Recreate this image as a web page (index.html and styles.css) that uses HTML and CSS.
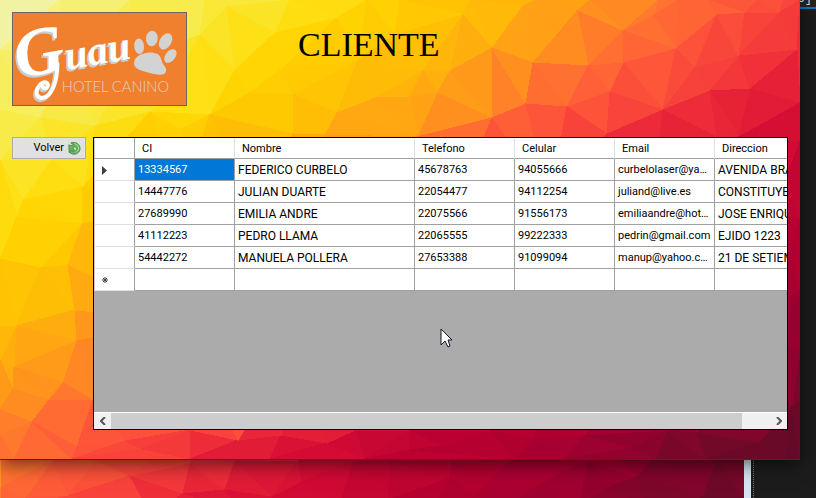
FILE: index.html
```html
<!DOCTYPE html>
<html lang="es">
<head>
<meta charset="utf-8">
<title>Cliente</title>
<link rel="stylesheet" href="styles.css">
</head>
<body>
<div class="desktop">
  <div class="editor" aria-hidden="true"><span class="code">6]</span></div>
  <div class="splitter" aria-hidden="true"></div>
  <div class="back-window" aria-hidden="true"><svg class="facets" id="back-facets"></svg></div>

  <main class="window">
    <svg class="facets" id="front-facets" aria-hidden="true"></svg>

    <header class="top">
      <svg class="logo" viewBox="0 0 175 94" role="img" aria-label="Guau Hotel Canino">
        <g transform="rotate(-10 15 74)">
          <path class="flourish-shade" d="M46 58C43 75 35 92 24 91C14 88 24 73 31 76C36 79 29 85 27 80"/>
          <text class="word shade" x="4" y="67"><tspan class="initial">G</tspan><tspan>uau</tspan></text>
          <path class="flourish" d="M48 57C45 74 37 90 26 89C16 86 26 71 33 74C38 77 31 83 29 78"/>
          <text class="word face" x="6" y="65"><tspan class="initial">G</tspan><tspan>uau</tspan></text>
        </g>
        <g class="paw">
          <ellipse cx="128" cy="34" rx="5" ry="8" transform="rotate(-5 128 34)"/>
          <ellipse cx="141" cy="26" rx="6" ry="8" transform="rotate(5 141 26)"/>
          <ellipse cx="155" cy="29" rx="6" ry="9" transform="rotate(30 155 29)"/>
          <ellipse cx="160" cy="44" rx="5" ry="8" transform="rotate(38 160 44)"/>
          <path d="M123 50C124 43 135 39 144 41C151 42 150 48 153 53C159 60 154 64 148 63C141 62 137 61 131 59C125 57 122 54 123 50Z"/>
        </g>
        <text x="49" y="81" class="logo-sub">HOTEL CANINO</text>
      </svg>
      <h1>CLIENTE</h1>
    </header>

    <div class="content">
      <button type="button" class="back">Volver
        <svg class="back-icon" viewBox="0 0 14 14" aria-hidden="true">
          <path d="M3 1C9 -1 13 3 13 7C13 11 9 14 5 13L1 11L1 10C5 11 8 10 9 8C9 5 7 5 5 6L7 9L1 9L1 3L3 4C5 3 6 3 7 3Z" fill="#6ab85f" stroke="#4a8f4c"/>
          <path d="M7 2C12 3 13 8 9 11" fill="none" stroke="#b4e3a4"/>
        </svg>
      </button>

      <section class="grid" aria-label="Clientes">
        <div class="grid-view">
          <table>
            <colgroup><col class="c-mark"><col><col class="c-name"><col><col><col><col></colgroup>
            <thead>
              <tr><th></th><th>CI</th><th>Nombre</th><th>Telefono</th><th>Celular</th><th>Email</th><th>Direccion</th></tr>
            </thead>
            <tbody>
              <tr><th><svg class="mark" viewBox="0 0 5 9"><path d="M0 0L5 4.500L0 9Z"/></svg></th><td class="selected">13334567</td><td class="caps">FEDERICO CURBELO</td><td>45678763</td><td>94055666</td><td class="email">curbelolaser@yahoo.com</td><td class="caps">AVENIDA BRASIL</td></tr>
              <tr><th></th><td>14447776</td><td class="caps">JULIAN DUARTE</td><td>22054477</td><td>94112254</td><td>juliand@live.es</td><td class="caps">CONSTITUYENTE</td></tr>
              <tr><th></th><td>27689990</td><td class="caps">EMILIA ANDRE</td><td>22075566</td><td>91556173</td><td class="email">emiliaandre@hotmail.com</td><td class="caps">JOSE ENRIQUE</td></tr>
              <tr><th></th><td>41112223</td><td class="caps">PEDRO LLAMA</td><td>22065555</td><td>99222333</td><td class="email">pedrin@gmail.com</td><td class="caps">EJIDO 1223</td></tr>
              <tr><th></th><td>54442272</td><td class="caps">MANUELA POLLERA</td><td>27653388</td><td>91099094</td><td class="email">manup@yahoo.com.uy</td><td class="caps">21 DE SETIEMBRE</td></tr>
              <tr><th><svg class="mark star" viewBox="0 0 6 6"><path d="M3 0V6M0 3H6M1 1L5 5M5 1L1 5"/></svg></th><td></td><td></td><td></td><td></td><td></td><td></td></tr>
            </tbody>
          </table>
        </div>
        <div class="scroll">
          <button type="button" aria-label="Izquierda"><svg viewBox="0 0 6 8"><path d="M5 0L1 4L5 8"/></svg></button>
          <div class="track"><div class="thumb"></div></div>
          <button type="button" aria-label="Derecha"><svg viewBox="0 0 6 8"><path d="M1 0L5 4L1 8"/></svg></button>
        </div>
      </section>
    </div>
  </main>

  <svg class="pointer" viewBox="0 0 13 20" aria-hidden="true"><path d="M1 1V17L5 13L8 19L10 18L8 12H12Z" fill="#fff" stroke="#151525"/></svg>
</div>
<script src="facets.js"></script>
</body>
</html>
```
FILE: styles.css
```css
* { box-sizing: border-box; }

body {
  margin: 0;
  font: 11px/16px Roboto, "Liberation Sans", sans-serif;
  color: #000;
}

.desktop {
  position: relative;
  height: 100vh;
  min-height: 400px;
  overflow: hidden;
  background: #1c1c1c;
}

.editor {
  position: absolute;
  top: 0;
  right: 0;
  width: 16px;
  height: 9px;
  border-bottom: 2px solid #007acc;
  background: #252526;
}
.code {
  position: absolute;
  right: 4px;
  bottom: 2px;
  font: 12px/12px "Liberation Mono", monospace;
  color: #dcdcdc;
}

.splitter {
  position: absolute;
  right: 62px;
  bottom: 0;
  height: 60px;
  border-right: 1px dotted #777;
}

.back-window {
  position: absolute;
  left: 0;
  right: 65px;
  bottom: 0;
  height: 60px;
  border-right: 7px solid #d6e4f1;
  overflow: hidden;
}

.facets {
  position: absolute;
  inset: 0;
  width: 100%;
  height: 100%;
  shape-rendering: crispEdges;
}

.window {
  position: relative;
  display: flex;
  flex-direction: column;
  height: calc(100% - 38px);
  margin-right: 16px;
  padding: 12px 12px 29px;
  border-bottom: 1px solid #6b1a24;
  box-shadow: 0 4px 18px rgba(0, 0, 0, 0.6);
}

.top {
  position: relative;
  display: flex;
  gap: 111px;
  height: 125px;
}
.logo {
  width: 175px;
  height: 94px;
  border: 1px solid #666;
  background: #f07f2e;
}
.word { font: italic bold 42px "Liberation Serif", serif; }
.initial { font-size: 70px; }
.shade { fill: #ccc; }
.face { fill: #fff; }
.flourish, .flourish-shade { fill: none; stroke: #fff; stroke-width: 4; stroke-linecap: round; }
.flourish-shade { stroke: #ccc; }
.paw { fill: #d3d3d3; }
.logo-sub { font: 300 15px Lato, sans-serif; fill: #e0d0c4; }

h1 {
  margin: 13px 0 0;
  font: 34px/40px "Liberation Serif", serif;
}

.content {
  position: relative;
  display: flex;
  flex: 1;
  gap: 7px;
  min-height: 0;
}

.back {
  display: flex;
  align-items: center;
  justify-content: flex-end;
  gap: 4px;
  width: 74px;
  height: 22px;
  padding: 0 4px;
  border: 1px solid #adadad;
  background: #e1e1e1;
  font: 11px/16px Roboto, "Liberation Sans", sans-serif;
  color: #000;
}
.back-icon { width: 13px; height: 13px; }

.grid {
  display: flex;
  flex: 1;
  flex-direction: column;
  min-width: 0;
  border: 1px solid #000;
  background: #ababab;
}
.grid-view { flex: 1; overflow: hidden; }

table {
  width: 721px;
  table-layout: fixed;
  border-spacing: 0;
  background: #fff;
}
col { width: 100px; }
.c-mark { width: 41px; }
.c-name { width: 180px; }
th, td {
  height: 22px;
  padding: 1px 1px 0 3px;
  border: 0 solid #a0a0a0;
  border-width: 0 1px 1px 0;
  overflow: hidden;
  font-weight: normal;
  text-align: left;
  text-overflow: ellipsis;
  white-space: nowrap;
}
thead th {
  height: 21px;
  padding: 1px 7px 0;
  border-right-color: #e0e0e0;
}
th:first-child {
  padding: 1px 7px 0;
  border-left: 1px solid #c8c8c8;
  border-right-color: #a0a0a0;
}
tbody th { border-bottom-color: #e0e0e0; }
.caps { font-size: 12px; }
.email { padding-right: 3px; }
.selected { background: #0078d7; color: #fff; }
.mark { display: block; width: 5px; height: 9px; fill: #404040; }
.star { width: 6px; height: 6px; stroke: #404040; }

.scroll {
  display: flex;
  height: 17px;
  border-top: 1px solid #fff;
  background: #f0f0f0;
}
.scroll button {
  display: grid;
  place-items: center;
  width: 17px;
  padding: 0;
  border: 0;
  background: none;
}
.scroll svg { width: 6px; height: 8px; fill: none; stroke: #555; stroke-width: 2; }
.track { flex: 1; padding-right: 28px; }
.thumb { height: 100%; background: #cdcdcd; }

.pointer {
  position: absolute;
  left: 440px;
  top: 328px;
  width: 13px;
  height: 20px;
}
```
FILE: facets.js
```js
// Low-poly backdrop: triangulates a list of points and fills each facet
// with a flat colour taken from a diagonal ramp.
const RAMP = [
  [0, 238, 245, 188], [130, 246, 240, 110], [225, 249, 233, 60], [310, 253, 224, 22],
  [370, 255, 213, 2], [440, 255, 199, 2], [520, 255, 184, 8], [590, 255, 156, 24],
  [660, 255, 122, 44], [730, 255, 94, 56], [810, 248, 66, 59], [870, 238, 44, 57],
  [930, 224, 26, 54], [1000, 210, 10, 52], [1130, 182, 0, 48], [1240, 164, 0, 48],
  [1310, 142, 2, 46], [1370, 120, 8, 42], [1450, 100, 10, 40], [1600, 80, 10, 36]
];

const FRONT = [
  [0,0],[60,0],[130,0],[205,0],[227,7],[290,0],[367,0],[400,0],[470,0],[535,0],[590,0],[658,0],[678,0],[707,0],[757,0],[782,0],[800,0],
  [200,35],[275,33],[235,70],[210,115],[250,93],[282,69],[293,95],[337,18],[337,113],[358,60],[375,98],[395,35],[463,15],[423,71],[450,71],[437,93],[492,48],[492,118],[417,137],[325,135],[410,97],[293,134],
  [523,6],[577,11],[623,31],[653,16],[533,63],[588,66],[624,63],[676,49],[717,15],[695,68],[710,91],[739,56],[745,13],[779,13],[797,50],[750,89],[526,104],[567,107],[610,92],[663,110],[607,134],[800,103],[739,137],[717,137],
  [0,50],[0,110],[40,118],[95,126],[150,112],[180,130],[70,60],[130,60],
  [0,160],[52,160],[23,200],[83,187],[17,217],[82,224],[0,259],[41,268],[68,265],[75,310],[16,326],[77,341],[14,367],[63,383],[13,389],[0,360],[0,326],[49,400],[0,410],[93,400],[0,435],
  [32,422],[14,459],[77,447],[72,459],[125,441],[142,449],[190,459],[190,430],[238,440],[270,459],[281,435],[327,443],[366,459],[355,430],[409,450],[409,430],[445,446],[490,430],[516,459],[534,438],[565,459],[584,435],[633,448],[668,430],[656,459],[697,432],[706,459],[759,442],[792,405],[787,459],[800,400],[800,459],[0,459],
  [785,180],[800,142],[800,220],[786,250],[800,290],[786,320],[800,350],
  [180,200],[260,220],[350,200],[450,220],[550,200],[650,220],[730,200],[180,320],[300,340],[420,320],[540,340],[660,320],[740,330]
];

const BACK = [
  [0,430],[52,460],[97,460],[129,476],[190,463],[183,494],[225,490],[272,497],[235,460],[68,496],[25,498],[0,488],
  [298,460],[302,482],[340,505],[354,460],[388,500],[390,460],[450,478],[450,460],[476,495],[510,460],[527,491],[580,505],[588,460],[613,485],[637,477],[655,455],[703,497],[717,460],[744,498],[744,430],[0,510],[744,510],[-300,560],[372,700],[1000,560],[600,430],[400,430],[200,430],
  [150,515],[250,520],[430,515],[500,520],[650,515]
];

function triangulate(points) {
  const n = points.length;
  const pts = points.concat([[-5000, -5000], [6000, -5000], [400, 9000]]);
  const circle = (a, b, c) => {
    const [ax, ay] = pts[a], [bx, by] = pts[b], [cx, cy] = pts[c];
    const d = 2 * (ax * (by - cy) + bx * (cy - ay) + cx * (ay - by)) || 1e-9;
    const a2 = ax * ax + ay * ay, b2 = bx * bx + by * by, c2 = cx * cx + cy * cy;
    const x = (a2 * (by - cy) + b2 * (cy - ay) + c2 * (ay - by)) / d;
    const y = (a2 * (cx - bx) + b2 * (ax - cx) + c2 * (bx - ax)) / d;
    return { v: [a, b, c], x, y, r: (ax - x) ** 2 + (ay - y) ** 2 };
  };
  let tris = [circle(n, n + 1, n + 2)];
  for (let i = 0; i < n; i++) {
    const edges = new Map();
    tris = tris.filter(t => {
      if ((pts[i][0] - t.x) ** 2 + (pts[i][1] - t.y) ** 2 >= t.r) return true;
      for (const [p, q] of [[0, 1], [1, 2], [2, 0]]) {
        const e = [t.v[p], t.v[q]].sort((m, k) => m - k);
        const key = e.join();
        if (edges.has(key)) edges.delete(key); else edges.set(key, e);
      }
      return false;
    });
    for (const [a, b] of edges.values()) tris.push(circle(a, b, i));
  }
  return tris.filter(t => t.v.every(k => k < n)).map(t => t.v.map(k => points[k]));
}

function colour(t) {
  let i = 1;
  while (i < RAMP.length - 1 && RAMP[i][0] < t) i++;
  const a = RAMP[i - 1], b = RAMP[i];
  const f = Math.max(0, Math.min(1, (t - a[0]) / (b[0] - a[0])));
  return "rgb(" + [1, 2, 3].map(k => Math.round(a[k] + (b[k] - a[k]) * f)).join() + ")";
}

function paint(id, points, box, shift) {
  const svg = document.getElementById(id);
  svg.setAttribute("viewBox", box);
  svg.setAttribute("preserveAspectRatio", "none");
  triangulate(points).forEach((tri, i) => {
    const x = (tri[0][0] + tri[1][0] + tri[2][0]) / 3;
    const y = (tri[0][1] + tri[1][1] + tri[2][1]) / 3;
    const jitter = ((i * 37) % 27) - 13;
    const fill = colour(x + 1.5 * y + jitter + shift);
    const poly = document.createElementNS("http://www.w3.org/2000/svg", "polygon");
    poly.setAttribute("points", tri.join(" "));
    poly.setAttribute("fill", fill);
    poly.setAttribute("stroke", fill);
    poly.setAttribute("stroke-width", "1");
    svg.appendChild(poly);
  });
}

paint("front-facets", FRONT, "0 0 800 459", 0);
paint("back-facets", BACK, "0 438 744 60", -40);
```
